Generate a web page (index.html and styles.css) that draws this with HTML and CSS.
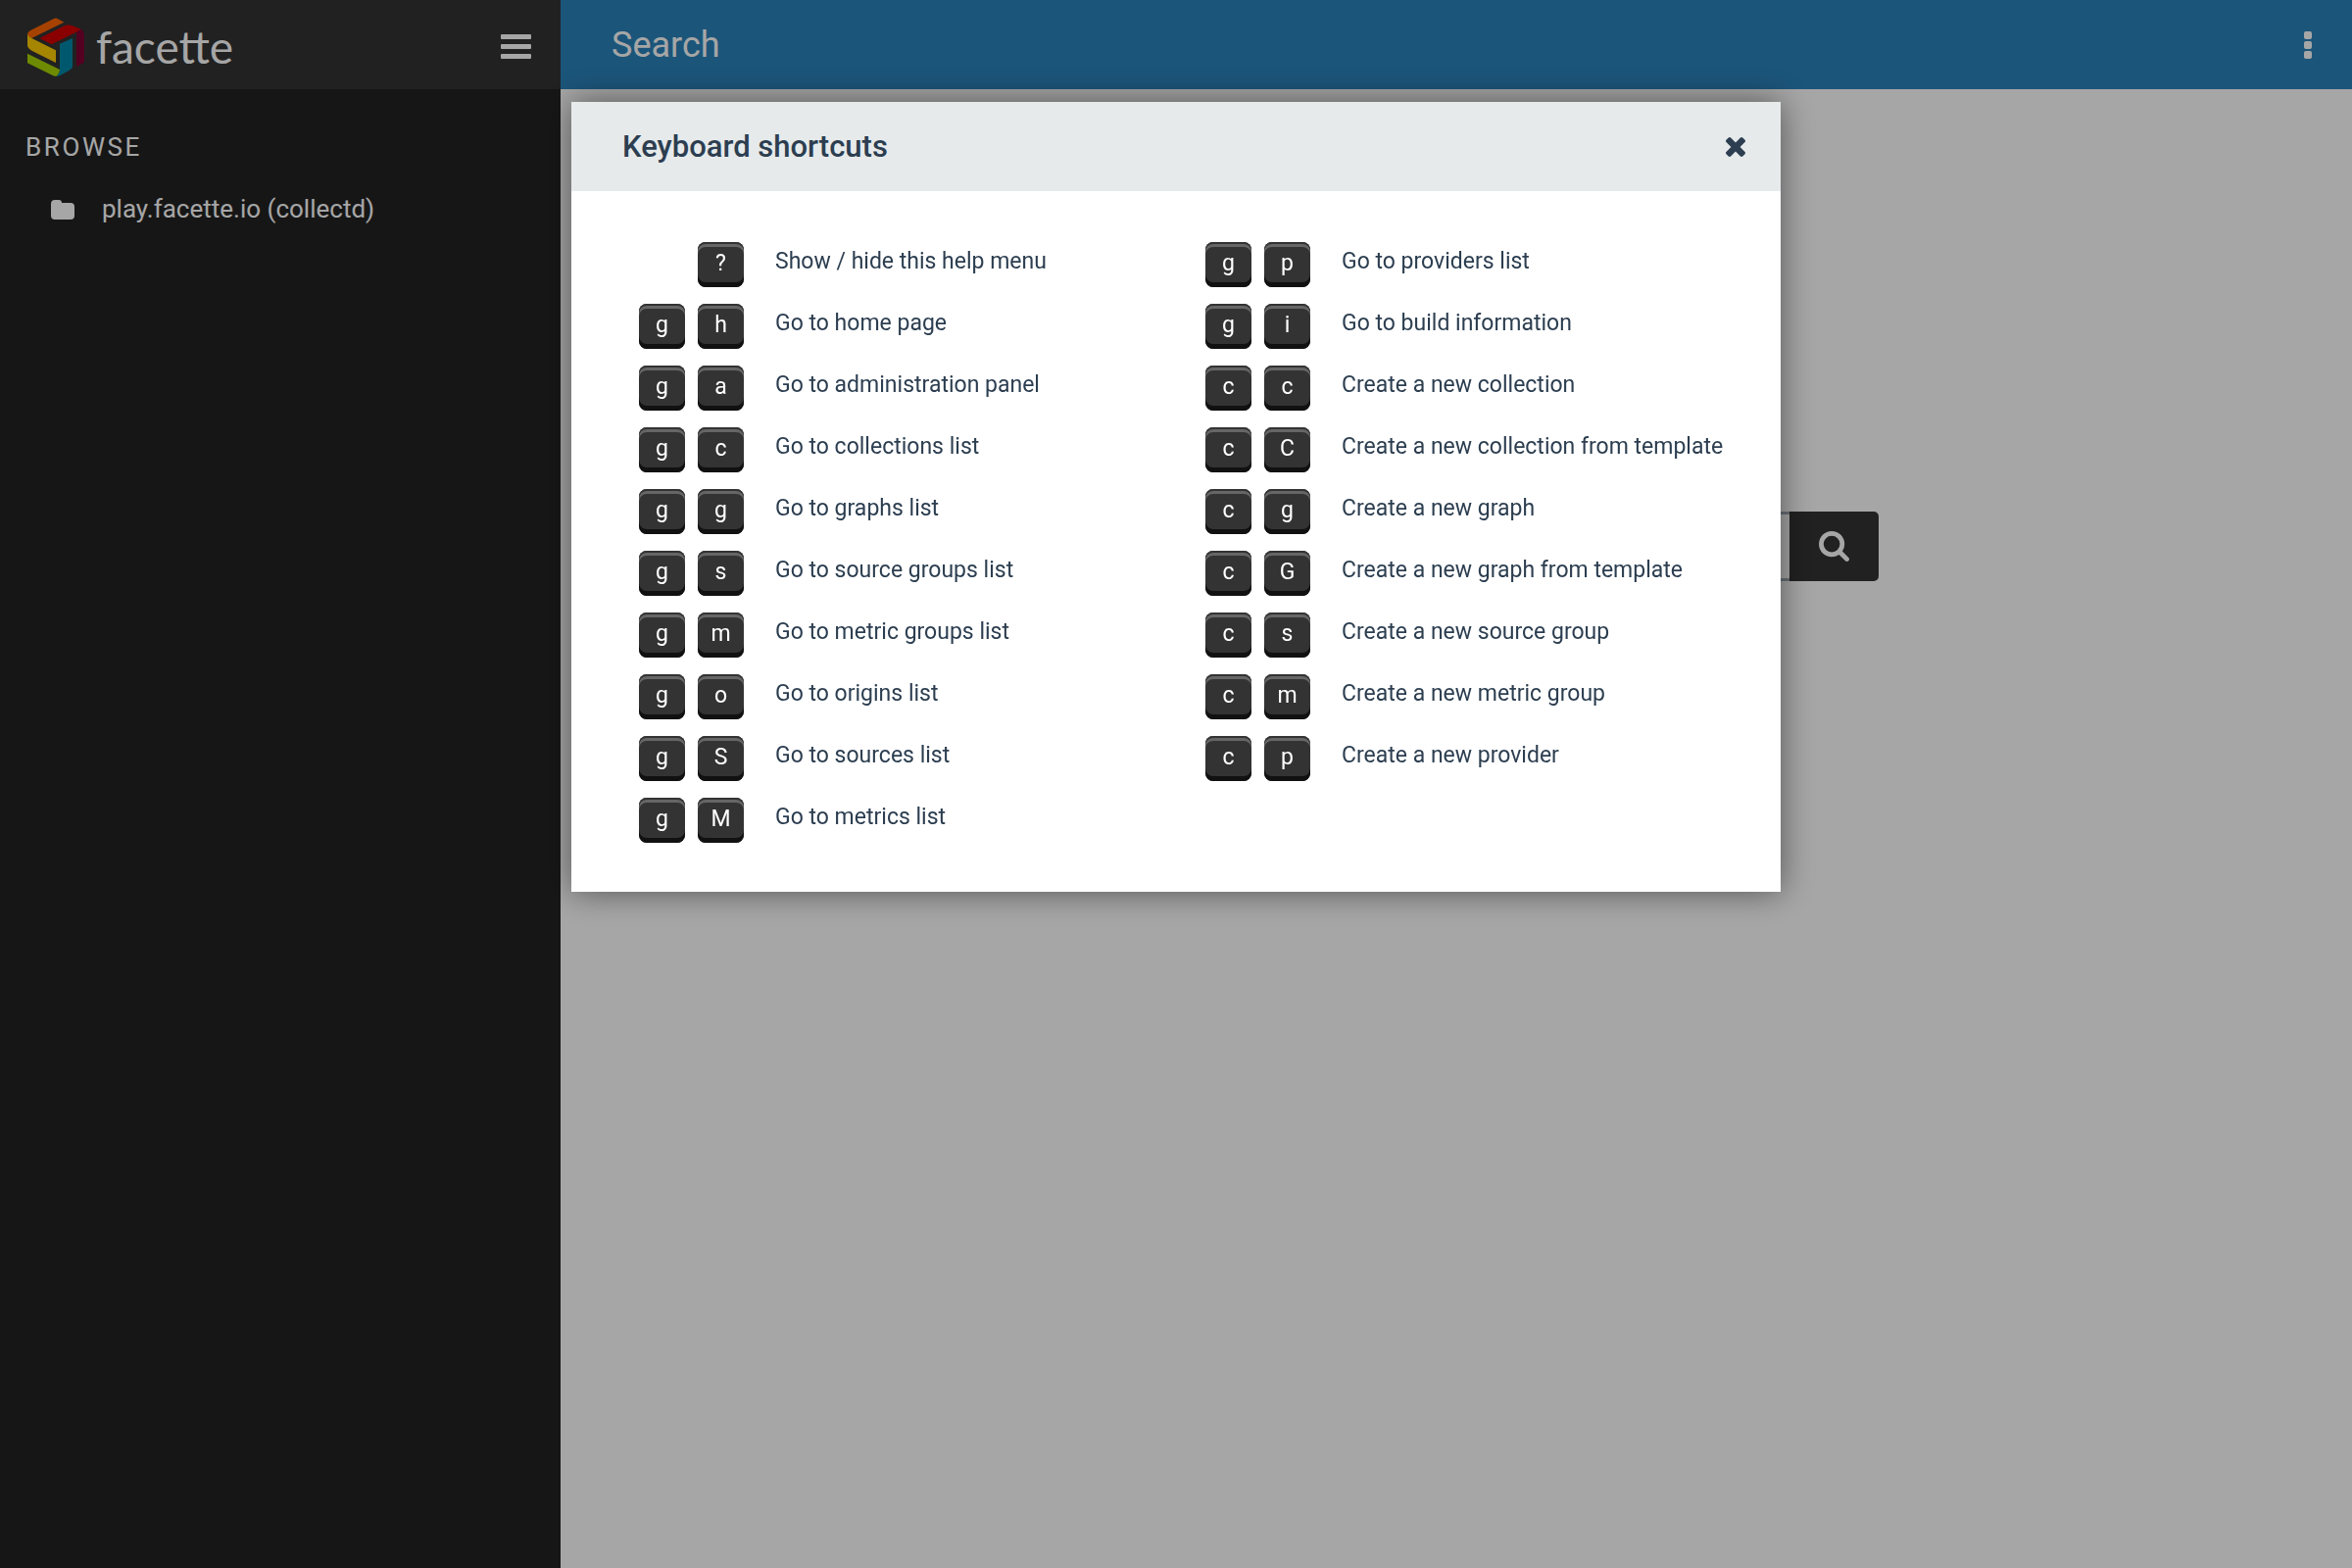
FILE: index.html
```html
<!DOCTYPE html>
<html lang="en">
<head>
<meta charset="utf-8">
<title>Facette</title>
<link rel="stylesheet" href="styles.css">
</head>
<body>
<div class="app">
  <aside class="sidebar">
    <header class="sidebar-header">
      <a class="brand" href="#">
        <svg class="brand-mark" viewBox="84 54 174 180" aria-hidden="true">
          <path fill="#ff6600" d="M84 104Q85 97 95 92L165 57Q171 54 177 58L196 68L97 117Q85 111 84 104z"/>
          <path fill="#ffcc00" d="M84 104Q86 112 97 117L171 154V192L97 155Q84 147 84 138z"/>
          <path fill="#aad400" d="M84 164L183 213Q183 226 172 234Q165 233 160 230L84 193z"/>
          <path fill="#0088aa" d="M183 134L222 117V203Q221 211 210 217L184 231Q178 234 172 234Q183 226 183 213z"/>
          <path fill="#d40000" d="M121 117L194 80Q209 74 222 79L251 91Q242 93 234 98L158 136z"/>
          <path fill="#800033" d="M234 98Q244 91 251 91Q258 97 258 105V187Q258 191 255 193L234 204z"/>
        </svg>
        <span class="brand-name">facette</span>
      </a>
      <button class="icon-button" type="button" aria-label="Toggle sidebar">
        <svg width="31" height="25" viewBox="0 0 31 25"><g fill="currentColor"><rect width="31" height="5" rx="1"/><rect y="10" width="31" height="5" rx="1"/><rect y="20" width="31" height="5" rx="1"/></g></svg>
      </button>
    </header>
    <nav class="browse">
      <h2 class="browse-title">BROWSE</h2>
      <a class="browse-item" href="#">
        <svg width="24" height="22" viewBox="0 -2 24 22"><path fill="currentColor" d="M0 4Q0 0 4 0H8Q11 0 11 3H20Q24 3 24 7V16Q24 20 20 20H4Q0 20 0 16z"/></svg>
        <span>play.facette.io (collectd)</span>
      </a>
    </nav>
  </aside>
  <main class="content">
    <header class="topbar">
      <h1 class="topbar-title">Search</h1>
      <button class="icon-button" type="button" aria-label="More">
        <svg width="8" height="28" viewBox="0 0 8 28"><g fill="currentColor"><rect width="8" height="8" rx="2"/><rect y="10" width="8" height="8" rx="2"/><rect y="20" width="8" height="8" rx="2"/></g></svg>
      </button>
    </header>
    <form class="search">
      <input class="search-input" type="text" aria-label="Search">
      <button class="search-button" type="button" aria-label="Run search">
        <svg width="31" height="31" viewBox="0 128 1664 1664"><path fill="currentColor" d="M1152 832q0-185-131.500-316.500t-316.500-131.500-316.500 131.500-131.500 316.500 131.500 316.500 316.500 131.500 316.500-131.500 131.500-316.500zm512 832q0 52-38 90t-90 38q-54 0-90-38l-343-342q-179 124-399 124-143 0-273.500-55.500t-225-150-150-225-55.500-273.500 55.500-273.500 150-225 225-150 273.500-55.500 273.500 55.500 225 150 150 225 55.500 273.500q0 220-124 399l343 343q37 37 37 90z"/></svg>
      </button>
    </form>
  </main>
</div>
<div class="overlay">
  <section class="modal" role="dialog" aria-labelledby="modal-title">
    <header class="modal-header">
      <h2 class="modal-title" id="modal-title">Keyboard shortcuts</h2>
      <button class="icon-button" type="button" aria-label="Close">
        <svg width="20" height="20" viewBox="110 366 1188 1188"><path fill="currentColor" d="M1298 1322q0 40-28 68l-136 136q-28 28-68 28t-68-28l-294-294-294 294q-28 28-68 28t-68-28l-136-136q-28-28-28-68t28-68l294-294-294-294q-28-28-28-68t28-68l136-136q28-28 68-28t68 28l294 294 294-294q28-28 68-28t68 28l136 136q28 28 28 68t-28 68l-294 294 294 294q28 28 28 68z"/></svg>
      </button>
    </header>
    <div class="modal-body">
      <ul class="shortcuts">
        <li><span class="keys"><kbd>?</kbd></span><span>Show / hide this help menu</span></li>
        <li><span class="keys"><kbd>g</kbd><kbd>h</kbd></span><span>Go to home page</span></li>
        <li><span class="keys"><kbd>g</kbd><kbd>a</kbd></span><span>Go to administration panel</span></li>
        <li><span class="keys"><kbd>g</kbd><kbd>c</kbd></span><span>Go to collections list</span></li>
        <li><span class="keys"><kbd>g</kbd><kbd>g</kbd></span><span>Go to graphs list</span></li>
        <li><span class="keys"><kbd>g</kbd><kbd>s</kbd></span><span>Go to source groups list</span></li>
        <li><span class="keys"><kbd>g</kbd><kbd>m</kbd></span><span>Go to metric groups list</span></li>
        <li><span class="keys"><kbd>g</kbd><kbd>o</kbd></span><span>Go to origins list</span></li>
        <li><span class="keys"><kbd>g</kbd><kbd>S</kbd></span><span>Go to sources list</span></li>
        <li><span class="keys"><kbd>g</kbd><kbd>M</kbd></span><span>Go to metrics list</span></li>
      </ul>
      <ul class="shortcuts">
        <li><span class="keys"><kbd>g</kbd><kbd>p</kbd></span><span>Go to providers list</span></li>
        <li><span class="keys"><kbd>g</kbd><kbd>i</kbd></span><span>Go to build information</span></li>
        <li><span class="keys"><kbd>c</kbd><kbd>c</kbd></span><span>Create a new collection</span></li>
        <li><span class="keys"><kbd>c</kbd><kbd>C</kbd></span><span>Create a new collection from template</span></li>
        <li><span class="keys"><kbd>c</kbd><kbd>g</kbd></span><span>Create a new graph</span></li>
        <li><span class="keys"><kbd>c</kbd><kbd>G</kbd></span><span>Create a new graph from template</span></li>
        <li><span class="keys"><kbd>c</kbd><kbd>s</kbd></span><span>Create a new source group</span></li>
        <li><span class="keys"><kbd>c</kbd><kbd>m</kbd></span><span>Create a new metric group</span></li>
        <li><span class="keys"><kbd>c</kbd><kbd>p</kbd></span><span>Create a new provider</span></li>
      </ul>
    </div>
  </section>
</div>
</body>
</html>
```
FILE: styles.css
```css
* { box-sizing: border-box; }

body {
  margin: 0;
  font-family: Roboto, "Liberation Sans", sans-serif;
  font-size: 23px;
  color: #2c3e50;
  background: #fff;
}

h1, h2, ul { margin: 0; padding: 0; }
svg { display: block; }

.app {
  display: grid;
  grid-template-columns: 572px 1fr;
  min-height: 100vh;
}

.icon-button {
  padding: 0;
  border: 0;
  background: none;
  color: inherit;
}

/* Sidebar */
.sidebar { background: #232323; color: #fff; }

.sidebar-header {
  display: flex;
  align-items: center;
  justify-content: space-between;
  height: 91px;
  padding: 4px 30px 0 28px;
  background: #333;
}

.brand {
  display: flex;
  align-items: center;
  gap: 12px;
  color: inherit;
  text-decoration: none;
}
.brand-mark { width: 58px; height: 60px; }
.brand-name {
  font-family: Lato, sans-serif;
  font-size: 46px;
  font-weight: 400;
  line-height: 60px;
}

.browse { padding: 39px 26px; font-size: 26px; }
.browse-title {
  font-size: 26px;
  font-weight: 400;
  line-height: 40px;
  letter-spacing: .1em;
}
.browse-item {
  display: flex;
  align-items: center;
  gap: 28px;
  margin-top: 23px;
  padding-left: 26px;
  line-height: 40px;
  color: inherit;
  text-decoration: none;
}

/* Main area */
.topbar {
  display: flex;
  align-items: center;
  justify-content: space-between;
  height: 91px;
  padding: 0 41px 0 52px;
  background: #2b83bc;
  color: #fff;
}
.topbar-title { font-size: 36px; font-weight: 400; }

.search {
  display: flex;
  max-width: 862px;
  height: 71px;
  margin: 431px auto 0;
}
.search-input {
  flex: 1;
  padding: 0 24px;
  border: 3px solid #a3adb5;
  border-right: 0;
  border-radius: 5px 0 0 5px;
  background: #fff;
  font: inherit;
}
.search-button {
  display: flex;
  align-items: center;
  justify-content: center;
  width: 91px;
  padding: 0;
  border: 0;
  border-radius: 0 5px 5px 0;
  background: #333;
  color: #fff;
}

/* Modal */
.overlay {
  position: fixed;
  inset: 0;
  display: flex;
  align-items: flex-start;
  justify-content: center;
  padding-top: 104px;
  background: rgba(0, 0, 0, .35);
}
.modal {
  width: 1234px;
  max-width: 100%;
  background: #fff;
  box-shadow: 0 0 32px rgba(0, 0, 0, .5);
}
.modal-header {
  display: flex;
  align-items: center;
  justify-content: space-between;
  height: 91px;
  padding: 0 36px 0 52px;
  background: #e6eaeb;
}
.modal-title { font-size: 31px; font-weight: 500; }
.modal-body {
  display: grid;
  grid-template-columns: 1fr 1fr;
  gap: 26px;
  padding: 52px 52px 50px;
}

.shortcuts {
  display: flex;
  flex-direction: column;
  gap: 17px;
  list-style: none;
}
.shortcuts li {
  display: flex;
  gap: 32px;
  line-height: 40px;
  white-space: nowrap;
}
.keys {
  display: flex;
  justify-content: flex-end;
  gap: 13px;
  width: 124px;
}
kbd {
  width: 47px;
  height: 46px;
  border-radius: 8px;
  background: #333;
  box-shadow: inset 0 -5px #111, inset 0 2px #333, inset 0 5px #666;
  color: #fff;
  font-family: inherit;
  font-size: 23px;
  line-height: 44px;
  text-align: center;
}
```
